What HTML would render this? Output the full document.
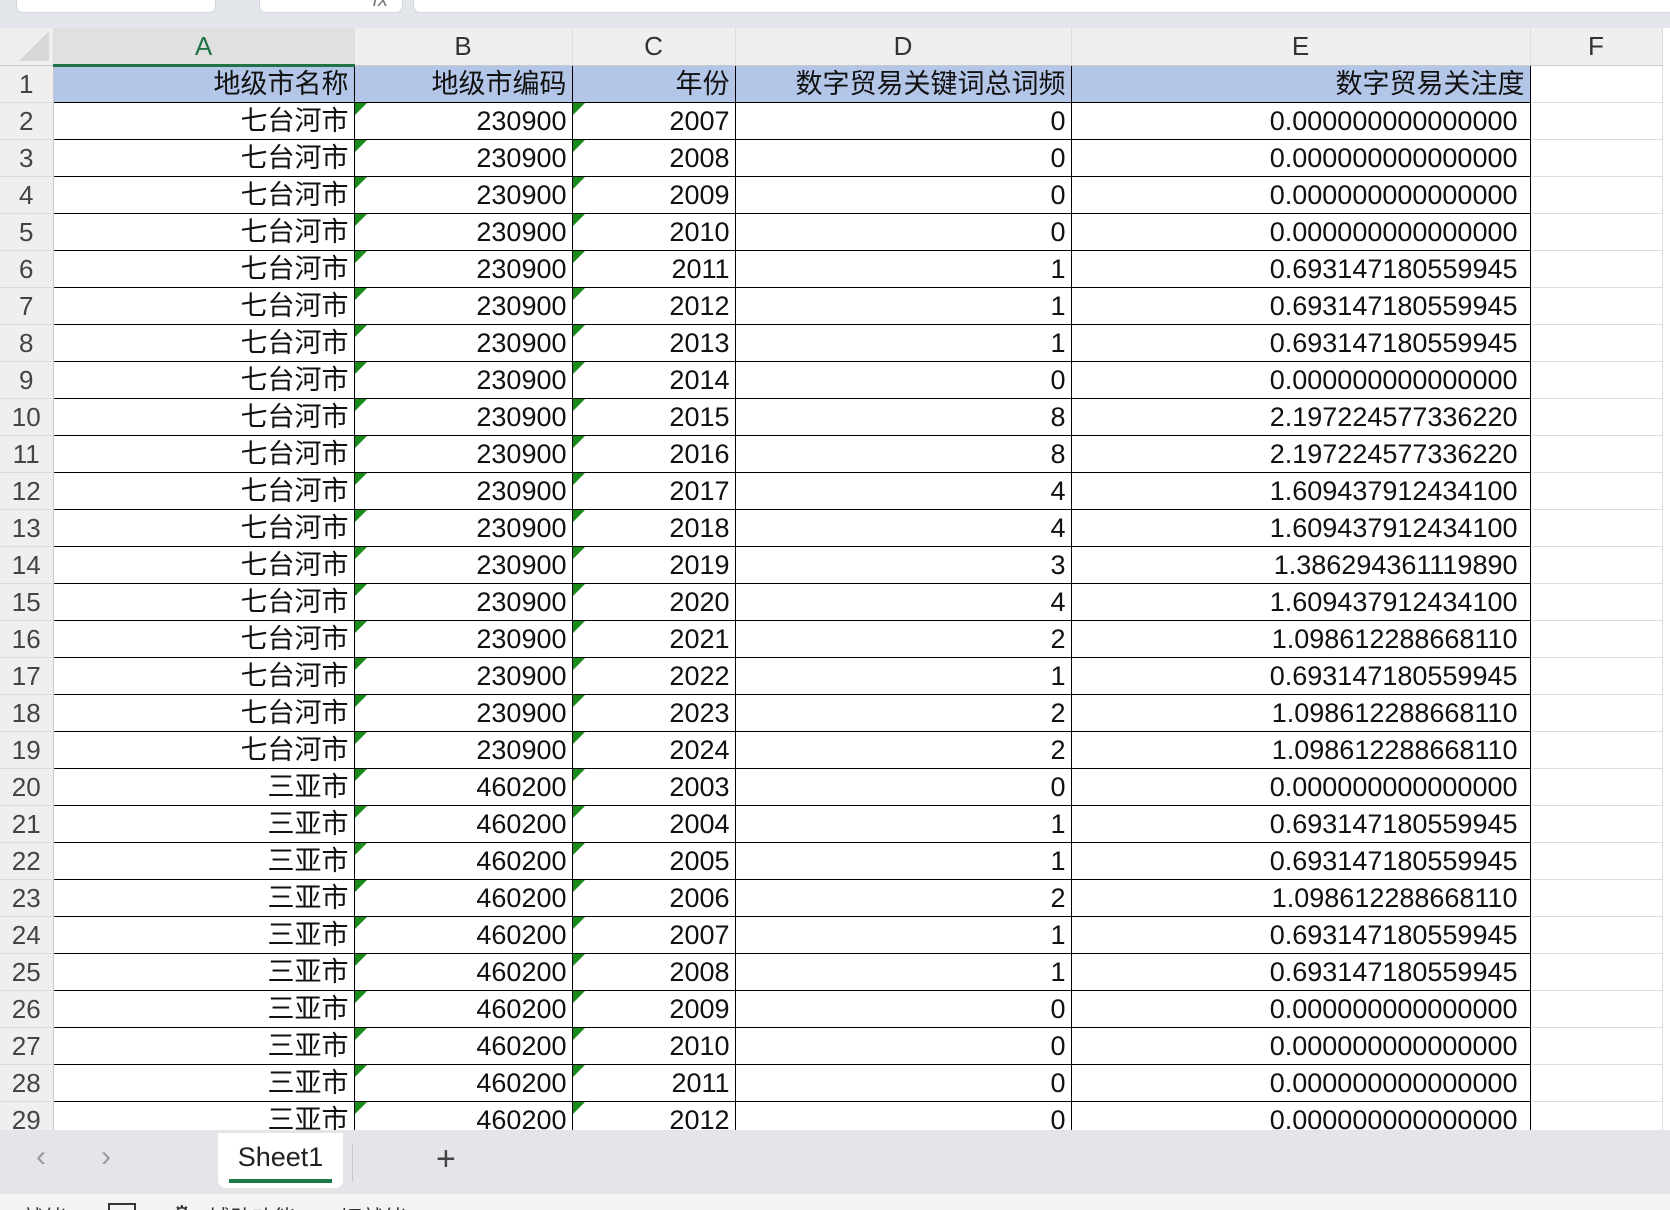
<!DOCTYPE html>
<html><head><meta charset="utf-8">
<style>
*{margin:0;padding:0;box-sizing:border-box}
body{width:1670px;height:1210px;overflow:hidden;background:#fff;position:relative;font-family:"Liberation Sans","Noto Sans CJK SC",sans-serif}
.top{position:absolute;left:0;top:0;width:1670px;height:28px;background:#e3e6ea}
.box{position:absolute;top:-6px;height:19px;background:#fff;border:1px solid #d4d7db;border-radius:0 0 7px 7px}
.grid{position:absolute;left:0;top:28px}
table{border-collapse:collapse;table-layout:fixed;width:1662px}
td{height:37px;font-size:27px;color:#111;text-align:right;padding:0 5px 0 0;white-space:nowrap;overflow:hidden;line-height:34px;position:relative;vertical-align:middle}
tr.h td{background:#efefef;color:#333;text-align:center;padding:0;border-right:1px solid #dcdcdc;border-bottom:1px solid #c8c8c8;font-size:26px}
tr.h td.sel{background:#e0e0e0;color:#217346;border-bottom:3px solid #217346}
td.n{background:#efefef;color:#444;text-align:center;padding:0;border-bottom:1px solid #dcdcdc;border-right:1px solid #c8c8c8;font-size:26px}
td.c{border:1px solid #000}
td.e{padding-right:12px}
td.f{border-right:1px solid #dcdcdc;border-bottom:1px solid #dcdcdc}
tr.r1 td.c{background:#b4c6e7}
td.t::before{content:"";position:absolute;left:0;top:0;border-top:12px solid #1a8a1a;border-right:12px solid transparent}
.tabbar{position:absolute;left:0;top:1130px;width:1670px;height:64px;background:#e3e5e8}
.status{position:absolute;left:0;top:1194px;width:1670px;height:16px;background:#f3f3f3;overflow:hidden;font-size:22px;color:#333}
</style></head><body>
<div class="top">
<div class="box" style="left:16px;width:200px"></div>
<div class="box" style="left:259px;width:144px;color:#777;font-size:20px;font-style:italic;line-height:10px;text-align:right;padding-right:14px">fx</div>
<div class="box" style="left:413px;width:1270px"></div>
</div>
<div class="grid">
<table>
<colgroup><col style="width:53px"><col style="width:301px"><col style="width:218px"><col style="width:163px"><col style="width:336px"><col style="width:459px"><col style="width:132px"></colgroup>
<tr class="h"><td style="position:relative"><div style="position:absolute;right:4px;bottom:4px;border-left:30px solid transparent;border-bottom:30px solid #d8d8d8"></div></td><td class="sel">A</td><td>B</td><td>C</td><td>D</td><td>E</td><td>F</td></tr>
<tr class="r1"><td class="n">1</td><td class="c">地级市名称</td><td class="c">地级市编码</td><td class="c">年份</td><td class="c">数字贸易关键词总词频</td><td class="c">数字贸易关注度</td><td class="f"></td></tr>
<tr><td class="n">2</td><td class="c">七台河市</td><td class="c t">230900</td><td class="c t">2007</td><td class="c">0</td><td class="c e">0.000000000000000</td><td class="f"></td></tr>
<tr><td class="n">3</td><td class="c">七台河市</td><td class="c t">230900</td><td class="c t">2008</td><td class="c">0</td><td class="c e">0.000000000000000</td><td class="f"></td></tr>
<tr><td class="n">4</td><td class="c">七台河市</td><td class="c t">230900</td><td class="c t">2009</td><td class="c">0</td><td class="c e">0.000000000000000</td><td class="f"></td></tr>
<tr><td class="n">5</td><td class="c">七台河市</td><td class="c t">230900</td><td class="c t">2010</td><td class="c">0</td><td class="c e">0.000000000000000</td><td class="f"></td></tr>
<tr><td class="n">6</td><td class="c">七台河市</td><td class="c t">230900</td><td class="c t">2011</td><td class="c">1</td><td class="c e">0.693147180559945</td><td class="f"></td></tr>
<tr><td class="n">7</td><td class="c">七台河市</td><td class="c t">230900</td><td class="c t">2012</td><td class="c">1</td><td class="c e">0.693147180559945</td><td class="f"></td></tr>
<tr><td class="n">8</td><td class="c">七台河市</td><td class="c t">230900</td><td class="c t">2013</td><td class="c">1</td><td class="c e">0.693147180559945</td><td class="f"></td></tr>
<tr><td class="n">9</td><td class="c">七台河市</td><td class="c t">230900</td><td class="c t">2014</td><td class="c">0</td><td class="c e">0.000000000000000</td><td class="f"></td></tr>
<tr><td class="n">10</td><td class="c">七台河市</td><td class="c t">230900</td><td class="c t">2015</td><td class="c">8</td><td class="c e">2.197224577336220</td><td class="f"></td></tr>
<tr><td class="n">11</td><td class="c">七台河市</td><td class="c t">230900</td><td class="c t">2016</td><td class="c">8</td><td class="c e">2.197224577336220</td><td class="f"></td></tr>
<tr><td class="n">12</td><td class="c">七台河市</td><td class="c t">230900</td><td class="c t">2017</td><td class="c">4</td><td class="c e">1.609437912434100</td><td class="f"></td></tr>
<tr><td class="n">13</td><td class="c">七台河市</td><td class="c t">230900</td><td class="c t">2018</td><td class="c">4</td><td class="c e">1.609437912434100</td><td class="f"></td></tr>
<tr><td class="n">14</td><td class="c">七台河市</td><td class="c t">230900</td><td class="c t">2019</td><td class="c">3</td><td class="c e">1.386294361119890</td><td class="f"></td></tr>
<tr><td class="n">15</td><td class="c">七台河市</td><td class="c t">230900</td><td class="c t">2020</td><td class="c">4</td><td class="c e">1.609437912434100</td><td class="f"></td></tr>
<tr><td class="n">16</td><td class="c">七台河市</td><td class="c t">230900</td><td class="c t">2021</td><td class="c">2</td><td class="c e">1.098612288668110</td><td class="f"></td></tr>
<tr><td class="n">17</td><td class="c">七台河市</td><td class="c t">230900</td><td class="c t">2022</td><td class="c">1</td><td class="c e">0.693147180559945</td><td class="f"></td></tr>
<tr><td class="n">18</td><td class="c">七台河市</td><td class="c t">230900</td><td class="c t">2023</td><td class="c">2</td><td class="c e">1.098612288668110</td><td class="f"></td></tr>
<tr><td class="n">19</td><td class="c">七台河市</td><td class="c t">230900</td><td class="c t">2024</td><td class="c">2</td><td class="c e">1.098612288668110</td><td class="f"></td></tr>
<tr><td class="n">20</td><td class="c">三亚市</td><td class="c t">460200</td><td class="c t">2003</td><td class="c">0</td><td class="c e">0.000000000000000</td><td class="f"></td></tr>
<tr><td class="n">21</td><td class="c">三亚市</td><td class="c t">460200</td><td class="c t">2004</td><td class="c">1</td><td class="c e">0.693147180559945</td><td class="f"></td></tr>
<tr><td class="n">22</td><td class="c">三亚市</td><td class="c t">460200</td><td class="c t">2005</td><td class="c">1</td><td class="c e">0.693147180559945</td><td class="f"></td></tr>
<tr><td class="n">23</td><td class="c">三亚市</td><td class="c t">460200</td><td class="c t">2006</td><td class="c">2</td><td class="c e">1.098612288668110</td><td class="f"></td></tr>
<tr><td class="n">24</td><td class="c">三亚市</td><td class="c t">460200</td><td class="c t">2007</td><td class="c">1</td><td class="c e">0.693147180559945</td><td class="f"></td></tr>
<tr><td class="n">25</td><td class="c">三亚市</td><td class="c t">460200</td><td class="c t">2008</td><td class="c">1</td><td class="c e">0.693147180559945</td><td class="f"></td></tr>
<tr><td class="n">26</td><td class="c">三亚市</td><td class="c t">460200</td><td class="c t">2009</td><td class="c">0</td><td class="c e">0.000000000000000</td><td class="f"></td></tr>
<tr><td class="n">27</td><td class="c">三亚市</td><td class="c t">460200</td><td class="c t">2010</td><td class="c">0</td><td class="c e">0.000000000000000</td><td class="f"></td></tr>
<tr><td class="n">28</td><td class="c">三亚市</td><td class="c t">460200</td><td class="c t">2011</td><td class="c">0</td><td class="c e">0.000000000000000</td><td class="f"></td></tr>
<tr><td class="n">29</td><td class="c">三亚市</td><td class="c t">460200</td><td class="c t">2012</td><td class="c">0</td><td class="c e">0.000000000000000</td><td class="f"></td></tr>
</table>
</div>
<div class="tabbar">
<div style="position:absolute;left:36px;top:10px;font-size:30px;color:#999">&#8249;</div>
<div style="position:absolute;left:101px;top:10px;font-size:30px;color:#999">&#8250;</div>
<div style="position:absolute;left:218px;top:3px;width:125px;height:55px;background:#fff;border-radius:0 0 8px 8px;text-align:center;font-size:27px;color:#222;line-height:48px">Sheet1<div style="position:absolute;left:11px;right:11px;top:46px;height:4px;background:#1a7a45"></div></div>
<div style="position:absolute;left:352px;top:14px;width:1px;height:38px;background:#c8c8c8"></div>
<div style="position:absolute;left:436px;top:12px;font-size:34px;color:#444;line-height:34px">+</div>
</div>
<div class="status">
<div style="position:absolute;left:22px;top:7px">就绪</div>
<div style="position:absolute;left:108px;top:9px;width:28px;height:20px;border:2px solid #333"></div>
<div style="position:absolute;left:172px;top:7px">⚙</div>
<div style="position:absolute;left:208px;top:7px">辅助功能：一切就绪</div>
</div>
</body></html>
